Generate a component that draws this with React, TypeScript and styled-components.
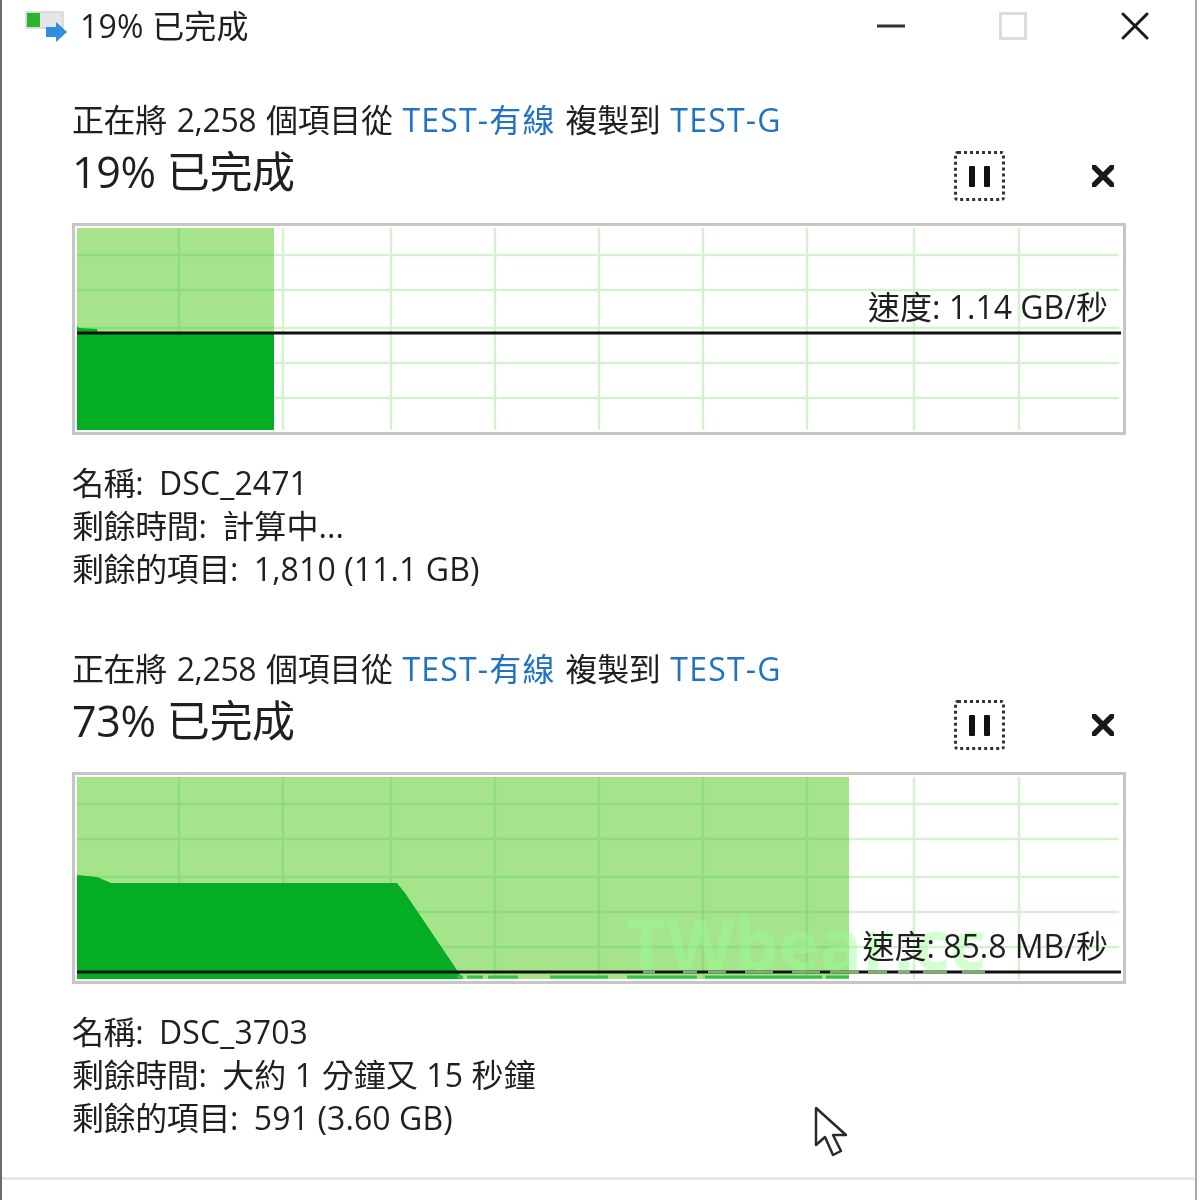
import * as React from "react";
import styled, { createGlobalStyle } from "styled-components";

const GlobalStyle = createGlobalStyle`
    html, body {
        margin: 0;
        padding: 0;
        background: #fff;
    }
    body {
        font-family: "Open Sans", "Noto Sans CJK TC", sans-serif;
        color: #1f1f1f;
    }
`;

const Window = styled.div`
    position: relative;
    box-sizing: border-box;
    width: 1197px;
    height: 1200px;
    border-left: 2px solid #6b6b6b;
    border-right: 2px solid #a8a8a8;
    background: #fff;
    overflow: hidden;
    filter: blur(0.7px);
`;

const TitleBar = styled.div`
    display: flex;
    align-items: center;
    height: 52px;
    padding: 0 46px 0 23px;
`;

const TitleText = styled.div`
    flex: 1;
    margin-left: 13px;
    font-size: 32px;
    line-height: 52px;
    letter-spacing: 0.2px;
`;

const WindowButtons = styled.div`
    display: flex;
    align-items: center;
    gap: 94px;
`;

const Content = styled.div`
    padding: 48px 69px 0 70px;
`;

const Block = styled.section`
    margin-bottom: 59px;
`;

const Caption = styled.div`
    font-size: 32px;
    line-height: 40px;
    letter-spacing: -0.4px;
    word-spacing: 2px;
    white-space: pre;
`;

const Place = styled.span`
    color: #1f72c4;
    letter-spacing: 1.2px;
`;

const TitleRow = styled.div`
    display: flex;
    align-items: center;
    justify-content: space-between;
    height: 60px;
    padding-top: 4px;
    box-sizing: border-box;
`;

const Percent = styled.div`
    font-size: 43px;
    line-height: 52px;
    letter-spacing: -0.3px;
`;

const Controls = styled.div`
    display: flex;
    align-items: center;
    gap: 87px;
    padding: 8px 12px 0 0;
`;

const PauseButton = styled.div`
    box-sizing: border-box;
    display: flex;
    align-items: center;
    justify-content: center;
    gap: 9px;
    width: 51px;
    height: 50px;
    border: 3px dotted #333;
    border-radius: 4px;
`;

const PauseBar = styled.span`
    width: 6px;
    height: 21px;
    background: #111;
    border-radius: 1px;
`;

const Chart = styled.div`
    position: relative;
    box-sizing: border-box;
    width: 1054px;
    height: 212px;
    margin-top: 23px;
    border: 3px solid #c6c6c6;
    padding: 2px;
    background: #fff;
`;

const Plot = styled.svg`
    display: block;
    width: 1044px;
    height: 202px;
`;

const Speed = styled.div<{ $center: number }>`
    position: absolute;
    right: 15px;
    top: ${(p) => p.$center - 23}px;
    font-size: 32px;
    line-height: 40px;
    letter-spacing: 0px;
    white-space: pre;
`;

const Watermark = styled.div`
    position: absolute;
    left: 551px;
    top: 128px;
    font-family: "Open Sans", sans-serif;
    font-weight: 700;
    font-size: 70px;
    line-height: 80px;
    color: rgba(150, 255, 150, 0.42);
    white-space: pre;
`;

const Details = styled.div`
    margin-top: 26px;
`;

const DetailRow = styled.div`
    font-size: 32px;
    line-height: 43px;
    letter-spacing: -0.4px;
    white-space: pre;
`;

const DetailValue = styled.span`
    letter-spacing: 0.1px;
`;

const Footer = styled.div`
    position: absolute;
    left: 0;
    right: 0;
    top: 1177px;
    height: 3px;
    background: #e8e8e8;
`;

const Cursor = styled.svg`
    position: absolute;
    left: 811px;
    top: 1105px;
`;

const verticals = [102, 206, 314, 418, 522, 626, 730, 837, 942];
const horizontals = [27, 62, 100, 135, 170];

interface ChartData {
    done: number;
    area: string;
    line: number;
    speed: string;
    speedCenter: number;
    watermark?: boolean;
    strips?: number[][];
    lineGaps?: number[][];
}

const Graph = ({ done, area, line, speed, speedCenter, watermark, strips, lineGaps }: ChartData) => (
    <Chart>
        <Plot viewBox="0 0 1044 202">
            {verticals.map((x) => (
                <line key={x} x1={x} x2={x} y1={0} y2={202} stroke="#d6f1d2" strokeWidth="2.5" />
            ))}
            {horizontals.map((y) => (
                <line key={y} x1={0} x2={1042} y1={y} y2={y} stroke="#d6f1d2" strokeWidth="2.5" />
            ))}
            <rect x="0" y="0" width={done} height="202" fill="#a6e48c" />
            {verticals.filter((x) => x < done).map((x) => (
                <line key={x} x1={x} x2={x} y1={0} y2={202} stroke="#8fdc7c" strokeWidth="2.5" />
            ))}
            {horizontals.map((y) => (
                <line key={y} x1={0} x2={done} y1={y} y2={y} stroke="#8fdc7c" strokeWidth="2.5" />
            ))}
            <polygon points={area} fill="#04ad24" />
            {strips?.map(([a, b]) => (
                <line key={a} x1={a} x2={b} y1={200} y2={200} stroke="#35c044" strokeWidth="3" />
            ))}
            <line x1="0" x2="1044" y1={line} y2={line} stroke="#111" strokeWidth="3" />
            {lineGaps?.map(([a, b]) => (
                <line key={a} x1={a} x2={b} y1={line} y2={line} stroke="#7fae72" strokeWidth="3" />
            ))}
        </Plot>
        {watermark && <Watermark>TWbear.cc</Watermark>}
        <Speed $center={speedCenter}>{speed}</Speed>
    </Chart>
);

interface JobData extends ChartData {
    percent: string;
    details: string[][];
}

const jobs: JobData[] = [
    {
        percent: "19% 已完成",
        done: 197,
        area: "0,98 2,100 20,101 21,105 197,105 197,202 0,202",
        line: 105,
        speed: "速度: 1.14 GB/秒",
        speedCenter: 84,
        details: [
            ["名稱:  ", "DSC_2471"],
            ["剩餘時間:  ", "計算中..."],
            ["剩餘的項目:  ", "1,810 (11.1 GB)"],
        ],
    },
    {
        percent: "73% 已完成",
        done: 772,
        area: "0,98 20,100 34,106 320,106 328,116 386,202 0,202",
        line: 195,
        speed: "速度: 85.8 MB/秒",
        speedCenter: 174,
        watermark: true,
        strips: [
            [380, 386],
            [390, 406],
            [411, 441],
            [473, 531],
            [550, 620],
            [628, 693],
            [693, 745],
            [749, 772],
        ],
        lineGaps: [
            [566, 578],
            [606, 620],
            [631, 649],
            [668, 696],
            [715, 743],
            [753, 782],
            [791, 810],
            [821, 833],
            [846, 870],
            [885, 908],
        ],
        details: [
            ["名稱:  ", "DSC_3703"],
            ["剩餘時間:  ", "大約 1 分鐘又 15 秒鐘"],
            ["剩餘的項目:  ", "591 (3.60 GB)"],
        ],
    },
];

const CopyIcon = () => (
    <svg width="42" height="32" viewBox="0 0 42 32">
        <rect x="1" y="2" width="37" height="16" fill="#e6e6e6" stroke="#c4c4c4" />
        <rect x="2" y="3" width="13" height="14" fill="#2cb52c" />
        <path d="M21 17h10v-5l11 10-11 10v-5H21z" fill="#2f8ee0" />
    </svg>
);

const CloseGlyph = ({ size, width }: { size: number; width: number }) => (
    <svg width={size} height={size} viewBox="0 0 28 28">
        <path d="M2 2 26 26M26 2 2 26" stroke="#1a1a1a" strokeWidth={width} strokeLinecap="round" />
    </svg>
);

export default function App() {
    return (
        <Window lang="zh-TW">
            <GlobalStyle />
            <TitleBar>
                <CopyIcon />
                <TitleText>19% 已完成</TitleText>
                <WindowButtons>
                    <svg width="28" height="4" viewBox="0 0 28 4">
                        <rect width="28" height="3" y="0.5" fill="#333" />
                    </svg>
                    <svg width="28" height="28" viewBox="0 0 28 28">
                        <rect x="1.5" y="1.5" width="25" height="25" fill="none" stroke="#dcdcdc" strokeWidth="3" />
                    </svg>
                    <CloseGlyph size={28} width={3} />
                </WindowButtons>
            </TitleBar>
            <Content>
                {jobs.map((job) => (
                    <Block key={job.percent}>
                        <Caption>
                            正在將 2,258 個項目從 <Place>TEST-有線</Place> 複製到 <Place>TEST-G</Place>
                        </Caption>
                        <TitleRow>
                            <Percent>{job.percent}</Percent>
                            <Controls>
                                <PauseButton>
                                    <PauseBar />
                                    <PauseBar />
                                </PauseButton>
                                <CloseGlyph size={22} width={7} />
                            </Controls>
                        </TitleRow>
                        <Graph {...job} />
                        <Details>
                            {job.details.map(([label, value]) => (
                                <DetailRow key={label}>
                                    {label}
                                    <DetailValue>{value}</DetailValue>
                                </DetailRow>
                            ))}
                        </Details>
                    </Block>
                ))}
            </Content>
            <Cursor width="36" height="54" viewBox="0 0 36 54">
                <path
                    d="M3 3V40L12 32 20 50 28 46 20 30H33Z"
                    fill="#fff"
                    stroke="#2a2a2a"
                    strokeWidth="2.5"
                    strokeLinejoin="round"
                />
            </Cursor>
            <Footer />
        </Window>
    );
}
